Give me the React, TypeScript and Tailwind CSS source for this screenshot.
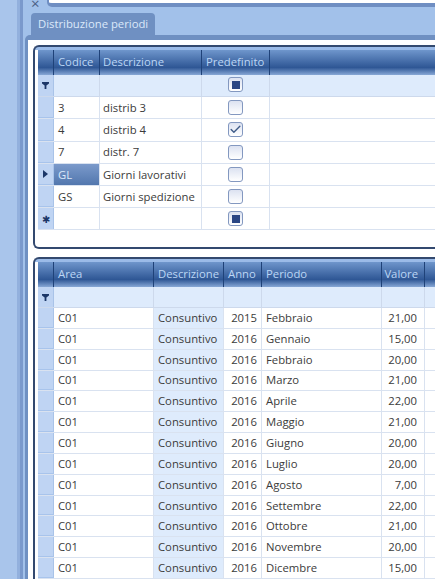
import { Check } from 'lucide-react';

const font = "font-['Open_Sans','Noto_Sans',sans-serif]";

const topRows = [
  { code: '3', desc: 'distrib 3', checked: false },
  { code: '4', desc: 'distrib 4', checked: true },
  { code: '7', desc: 'distr. 7', checked: false },
  { code: 'GL', desc: 'Giorni lavorativi', checked: false, current: true },
  { code: 'GS', desc: 'Giorni spedizione', checked: false },
];

const months: [string, string, string][] = [
  ['2015', 'Febbraio', '21,00'],
  ['2016', 'Gennaio', '15,00'],
  ['2016', 'Febbraio', '20,00'],
  ['2016', 'Marzo', '21,00'],
  ['2016', 'Aprile', '22,00'],
  ['2016', 'Maggio', '21,00'],
  ['2016', 'Giugno', '20,00'],
  ['2016', 'Luglio', '20,00'],
  ['2016', 'Agosto', '7,00'],
  ['2016', 'Settembre', '22,00'],
  ['2016', 'Ottobre', '21,00'],
  ['2016', 'Novembre', '20,00'],
  ['2016', 'Dicembre', '15,00'],
];

function HeaderCell({ className, children }: { className: string; children?: React.ReactNode }) {
  return (
    <div className={`flex h-full shrink-0 items-center whitespace-nowrap border-r border-[#1f4279] px-[4px] text-[#bcd6f5] ${className}`}>
      {children}
    </div>
  );
}

function FilterIcon() {
  return (
    <svg width="7" height="7" viewBox="0 0 7 7">
      <path d="M0 0h7v1.6L4.4 3.4V7H2.6V3.4L0 1.6z" fill="#1c3768" />
    </svg>
  );
}

function Box({ state }: { state: 'empty' | 'checked' | 'mixed' }) {
  return (
    <div className="flex h-[15px] w-[15px] items-center justify-center rounded-[3px] border-[1.5px] border-[#8398c0] bg-gradient-to-b from-[#dce2f1] to-white">
      {state === 'mixed' && <div className="h-[8px] w-[8px] bg-[#2a4684]" />}
      {state === 'checked' && <Check size={13} strokeWidth={2.6} className="text-[#3f5b88]" />}
    </div>
  );
}

function RowHead({ className, children }: { className: string; children?: React.ReactNode }) {
  return (
    <div className={`flex w-[16px] shrink-0 items-center justify-center border-r border-[#a9c3e8] bg-[#bfd4f3] ${className}`}>
      {children}
    </div>
  );
}

export default function App() {
  return (
    <div className={`${font} flex h-[579px] w-[435px] overflow-hidden bg-[#a2c1ea] text-[11.3px] text-[#3b3b3b]`}>
      {/* left docking strip */}
      <div className="w-[17px] shrink-0 bg-[#a9c5eb]" />
      <div className="w-[3px] shrink-0 bg-[#92b0dd]" />
      <div className="w-[3px] shrink-0 bg-[#7a99cc]" />

      <div className="flex min-w-0 flex-1 flex-col">
        {/* search bar strip */}
        <div className="relative h-[13px] shrink-0">
          <span className="absolute left-[8px] top-[-8px] text-[15px] text-[#4a5f85]">×</span>
          <div className="ml-[24px] h-[7px] rounded-bl-[5px] border-b-[4px] border-l-2 border-[#6f8ec2] bg-white" />
        </div>

        <div className="flex h-[22px] shrink-0 items-end">
          <div className="ml-[8px] flex h-[22px] w-[124px] items-center whitespace-nowrap rounded-t-[4px] bg-[#6f90c2] pl-[7px] text-[#dce9fa]">
            Distribuzione periodi
          </div>
        </div>

        {/* tab page */}
        <div className="ml-[2px] flex-1 rounded-tl-[5px] border-l-[3px] border-t-[5px] border-[#6f90c2] bg-white pl-[5px] pt-[5px]">
          {/* upper grid */}
          <div className="flex h-[204px] flex-col rounded-l-[6px] border-y-2 border-l-2 border-[#33496f] bg-[linear-gradient(#9bbbe8_3px,#fff_3px)] pl-[3px] pt-[3px]">
            <div className="flex h-[25px] shrink-0 bg-gradient-to-b from-[#6f96cc] via-[#2f5795] via-70% to-[#88a8d6]">
              <HeaderCell className="w-[16px]" />
              <HeaderCell className="w-[46px]">Codice</HeaderCell>
              <HeaderCell className="w-[102px] pl-[3px]">Descrizione</HeaderCell>
              <HeaderCell className="w-[68px]">Predefinito</HeaderCell>
              <div className="flex-1" />
            </div>
            <div className="flex h-[22px] shrink-0 border-b border-[#cdd9ec] bg-[#deebfc]">
              <RowHead className="">
                <FilterIcon />
              </RowHead>
              <div className="w-[46px] shrink-0 border-r border-[#cdd9ec]" />
              <div className="w-[102px] shrink-0 border-r border-[#cdd9ec]" />
              <div className="flex w-[68px] shrink-0 items-center justify-center border-r border-[#cdd9ec] pb-[2px]">
                <Box state="mixed" />
              </div>
            </div>
            {topRows.map((r) => (
              <div key={r.code} className="flex h-[22.3px] shrink-0 border-b border-[#d9e2f0]">
                <RowHead className="border-b border-b-[#a8c4ec]">
                  {r.current && <div className="h-0 w-0 border-y-[4px] border-l-[5px] border-y-transparent border-l-[#1c3768]" />}
                </RowHead>
                <div
                  className={`flex w-[46px] shrink-0 items-center border-r border-[#d9e2f0] px-[4px] pt-[1px] ${
                    r.current ? 'bg-gradient-to-b from-[#7b9acb] to-[#5277ae] text-[#dce9fa]' : ''
                  }`}
                >
                  {r.code}
                </div>
                <div className="flex w-[102px] shrink-0 items-center whitespace-nowrap border-r border-[#d9e2f0] pl-[3px] pr-[4px] pt-[1px]">{r.desc}</div>
                <div className="flex w-[68px] shrink-0 items-center justify-center border-r border-[#d9e2f0]">
                  <Box state={r.checked ? 'checked' : 'empty'} />
                </div>
              </div>
            ))}
            <div className="flex h-[22px] shrink-0 border-b border-[#d9e2f0]">
              <RowHead className="bg-[#b4cdf1] text-[#1c3768]">
                <span className="text-[10px] leading-none">✱</span>
              </RowHead>
              <div className="w-[46px] shrink-0 border-r border-[#d9e2f0]" />
              <div className="w-[102px] shrink-0 border-r border-[#d9e2f0]" />
              <div className="flex w-[68px] shrink-0 items-center justify-center border-r border-[#d9e2f0]">
                <Box state="mixed" />
              </div>
            </div>
          </div>

          {/* lower grid */}
          <div className="mt-[8px] flex flex-col rounded-tl-[6px] border-l-2 border-t-2 border-[#33496f] bg-[linear-gradient(#9bbbe8_3px,#fff_3px)] pl-[3px] pt-[3px]">
            <div className="flex h-[25px] shrink-0 bg-gradient-to-b from-[#6f96cc] via-[#2f5795] via-70% to-[#88a8d6]">
              <HeaderCell className="w-[16px]" />
              <HeaderCell className="w-[100px]">Area</HeaderCell>
              <HeaderCell className="w-[70px]">Descrizione</HeaderCell>
              <HeaderCell className="w-[38px]">Anno</HeaderCell>
              <HeaderCell className="w-[120px]">Periodo</HeaderCell>
              <HeaderCell className="w-[43px] justify-end pr-[6px]">Valore</HeaderCell>
              <div className="flex-1" />
            </div>
            <div className="flex h-[21px] shrink-0 border-b border-[#cdd9ec] bg-[#deebfc]">
              <RowHead className="">
                <FilterIcon />
              </RowHead>
              <div className="w-[100px] shrink-0 border-r border-[#cdd9ec]" />
              <div className="w-[70px] shrink-0 border-r border-[#cdd9ec]" />
              <div className="w-[38px] shrink-0 border-r border-[#cdd9ec]" />
              <div className="w-[120px] shrink-0 border-r border-[#cdd9ec]" />
              <div className="w-[43px] shrink-0 border-r border-[#cdd9ec]" />
            </div>
            {months.map(([year, month, value]) => (
              <div key={month + year} className="flex h-[20.85px] shrink-0 border-b border-[#d9e2f0]">
                <RowHead className="border-b border-b-[#a8c4ec]" />
                <div className="flex w-[100px] shrink-0 items-center border-r border-[#d9e2f0] px-[4px] pt-[1px]">C01</div>
                <div className="flex w-[70px] shrink-0 items-center border-r border-[#d9e2f0] bg-[#deebfc] px-[4px] pt-[1px]">Consuntivo</div>
                <div className="flex w-[38px] shrink-0 items-center justify-end border-r border-[#d9e2f0] pl-[3px] pr-[4px] pt-[1px]">{year}</div>
                <div className="flex w-[120px] shrink-0 items-center border-r border-[#d9e2f0] px-[4px] pt-[1px]">{month}</div>
                <div className="flex w-[43px] shrink-0 items-center justify-end border-r border-[#d9e2f0] pr-[7px] pt-[1px]">{value}</div>
              </div>
            ))}
          </div>
        </div>
      </div>
    </div>
  );
}
